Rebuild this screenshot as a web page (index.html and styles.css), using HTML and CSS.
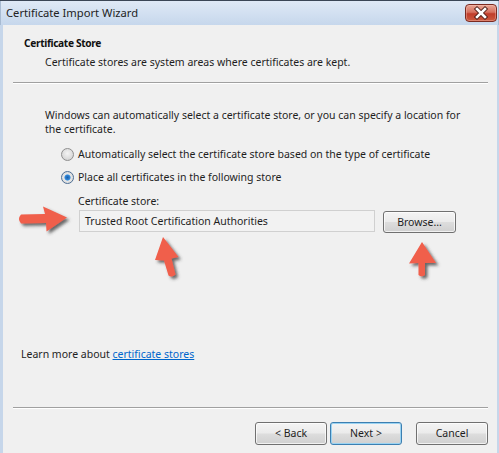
FILE: index.html
```html
<!DOCTYPE html>
<html>
<head>
<meta charset="utf-8">
<link rel="stylesheet" href="styles.css">
</head>
<body>
<div class="window">
  <div class="titlebar">
    <span class="title">Certificate Import Wizard</span>
    <span class="close">
      <svg width="30" height="16" viewBox="0 0 30 16">
        <path d="M11 4 L19 12 M19 4 L11 12" stroke="#4a1a14" stroke-width="4.4" stroke-linecap="square" fill="none"/>
        <path d="M11 4 L19 12 M19 4 L11 12" stroke="#ffffff" stroke-width="2.6" stroke-linecap="square" fill="none"/>
      </svg>
    </span>
  </div>
  <div class="body">
    <div class="header">
      <div class="h-title">Certificate Store</div>
      <div class="h-sub">Certificate stores are system areas where certificates are kept.</div>
    </div>
    <div class="sep"></div>
    <div class="content">
      <p class="intro">Windows can automatically select a certificate store, or you can specify a location for<br>the certificate.</p>
      <div class="options">
        <div class="opt"><span class="radio"></span><span>Automatically select the certificate store based on the type of certificate</span></div>
        <div class="opt"><span class="radio checked"></span><span>Place all certificates in the following store</span></div>
      </div>
      <div class="store">
        <div class="store-label">Certificate store:</div>
        <div class="store-row">
          <div class="input">Trusted Root Certification Authorities</div>
          <div class="btn browse">Browse...</div>
        </div>
      </div>
      <div class="learn">Learn more about <span class="link">certificate stores</span></div>
    </div>
    <div class="sep bottom-sep"></div>
    <div class="footer">
      <div class="btn">&lt; Back</div>
      <div class="btn default">Next &gt;</div>
      <div class="btn cancel">Cancel</div>
    </div>
  </div>
  <svg class="annot" width="499" height="453" viewBox="0 0 499 453">
    <defs>
      <filter id="sh" x="-30%" y="-30%" width="160%" height="160%">
        <feDropShadow dx="2.5" dy="2.5" stdDeviation="1.6" flood-color="#3a3a3a" flood-opacity="0.75"/>
      </filter>
    </defs>
    <g fill="#f05e4b" filter="url(#sh)">
      <path d="M21 214.5 L45 214 L43 206.5 L67 217.5 L46.5 231.5 L46 223 L21 223.5 Q17 219 21 214.5 Z"/>
      <path d="M163 237 L178.5 257 L171.5 258.5 L175.5 274.5 Q172 278 168.5 275.5 L164 260.5 L155 260 Z"/>
      <path d="M422 242 L436 263 L425 263 L425 275 Q421.5 277.5 418.5 275 L418.5 263 L409 263.5 Z"/>
    </g>
  </svg>
</div>
</body>
</html>
```

FILE: styles.css
```css
html, body {
  margin: 0;
  padding: 0;
}
body {
  width: 499px;
  height: 453px;
  overflow: hidden;
  background: #f0f0f0;
  font-family: "Noto Sans", "Open Sans", sans-serif;
  font-size: 10.5px;
  color: #1e1e1e;
}
.window {
  position: relative;
  width: 499px;
  height: 453px;
  display: flex;
  flex-direction: column;
}
.titlebar {
  height: 24px;
  border-top: 1px solid #3b4656;
  background: linear-gradient(#dfe9f6, #c6d7ec);
  display: flex;
  align-items: center;
  justify-content: space-between;
  padding: 0 2px 0 6px;
  box-shadow: inset 1px 0 #a8bbd2, inset -1px 0 #a8bbd2;
}
.title {
  font-size: 11.2px;
  color: #222;
  margin-top: -1px;
}
.close {
  display: flex;
  box-sizing: border-box;
  width: 32px;
  height: 18px;
  border: 1px solid #7b2a20;
  border-radius: 4px;
  background: linear-gradient(#e9a595 0%, #d6715f 45%, #c03c2a 55%, #cc5a3f 100%);
  box-shadow: inset 0 0 0 1px rgba(255, 210, 200, 0.35);
}
.close svg {
  display: block;
}
.body {
  flex: 1;
  display: flex;
  flex-direction: column;
  box-shadow: inset 3px 0 #c6d6ea, inset -2px 0 #c6d6ea;
}
.header {
  padding: 11px 0 0 24px;
}
.h-title {
  font-weight: bold;
  font-size: 10.2px;
  letter-spacing: -0.35px;
  line-height: 14px;
  color: #111;
}
.h-sub {
  margin: 5px 0 0 21px;
  line-height: 14px;
}
.sep {
  margin: 13px 11px 0 13px;
  height: 1px;
  background: #a0a0a0;
  border-bottom: 1px solid #ffffff;
}
.content {
  padding: 0 0 0 45px;
}
.intro {
  margin: 24px 0 0 0;
  line-height: 14px;
}
.options {
  margin: 10px 0 0 16px;
  display: flex;
  flex-direction: column;
  gap: 7px;
}
.opt {
  height: 16px;
  display: flex;
  align-items: center;
  gap: 4px;
}
.radio {
  width: 11px;
  height: 11px;
  border-radius: 50%;
  border: 1px solid #8f8f8f;
  background: radial-gradient(circle at 50% 40%, #f4f4f4 0%, #dcdcdc 60%, #c8c8c8 100%);
  display: inline-block;
}
.radio.checked {
  background: radial-gradient(circle at 50% 50%, #1a5fa8 0%, #2d80d2 28%, #4fa0e6 36%, #e6e6e6 44%, #d4d4d4 100%);
  border-color: #4d6e94;
}
.store {
  margin: 9px 0 0 33px;
}
.store-label {
  line-height: 14px;
}
.store-row {
  display: flex;
  align-items: flex-start;
  margin-top: 2px;
  gap: 8px;
}
.input {
  width: 296px;
  height: 22px;
  box-sizing: border-box;
  border: 1px solid #d0d0d0;
  background: #f2f2f2;
  padding: 0 5px;
  line-height: 20px;
  margin-left: 1px;
}
.btn {
  width: 73px;
  height: 22px;
  box-sizing: border-box;
  border: 1px solid #707070;
  border-radius: 3px;
  background: linear-gradient(#f4f4f4 0%, #ebebeb 48%, #dddddd 52%, #d0d0d0 100%);
  box-shadow: inset 0 0 0 1px rgba(255,255,255,0.7);
  text-align: center;
  line-height: 20px;
  color: #1e1e1e;
}
.browse {
  margin-top: 1px;
}
.learn {
  margin: 114px 0 0 -24px;
  line-height: 14px;
}
.link {
  color: #0066cc;
  text-decoration: underline;
}
.bottom-sep {
  margin-top: 46px;
}
.footer {
  display: flex;
  justify-content: flex-end;
  margin: 13px 11px 0 0;
}
.footer .btn {
  height: 23px;
  width: 72px;
  line-height: 21px;
}
.footer .default {
  margin-left: 3px;
  border-color: #3c7fb1;
  box-shadow: inset 0 0 0 1px #9ad3f2;
}
.footer .cancel {
  margin-left: 14px;
}
.annot {
  position: absolute;
  left: 0;
  top: 0;
  pointer-events: none;
}
```
